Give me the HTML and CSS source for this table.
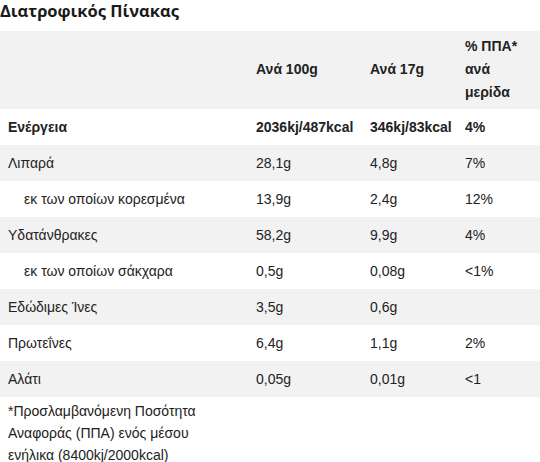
FILE: index.html
```html
<!DOCTYPE html>
<html lang="el">
<head>
  <meta charset="UTF-8" />
  <meta name="viewport" content="width=device-width, initial-scale=1.0"/>
  <title>Διατροφικός Πίνακας</title>
  <link rel="stylesheet" href="styles.css">
</head>
<body>
  <h2 class="titlos">Διατροφικός Πίνακας</h2>

  <table class="pinakas">
    <colgroup>
      <col class="c-onoma">
      <col class="c-100">
      <col class="c-merida">
      <col class="c-ppa">
    </colgroup>
    <thead>
      <tr>
        <th></th>
        <th>Ανά 100g</th>
        <th>Ανά 17g</th>
        <th>% ΠΠΑ* ανά μερίδα</th>
      </tr>
    </thead>
    <tbody>
      <tr class="energeia">
        <td>Ενέργεια</td>
        <td>2036kj/487kcal</td>
        <td>346kj/83kcal</td>
        <td>4%</td>
      </tr>
      <tr>
        <td>Λιπαρά</td>
        <td>28,1g</td>
        <td>4,8g</td>
        <td>7%</td>
      </tr>
      <tr class="ypo">
        <td>εκ των οποίων κορεσμένα</td>
        <td>13,9g</td>
        <td>2,4g</td>
        <td>12%</td>
      </tr>
      <tr>
        <td>Υδατάνθρακες</td>
        <td>58,2g</td>
        <td>9,9g</td>
        <td>4%</td>
      </tr>
      <tr class="ypo">
        <td>εκ των οποίων σάκχαρα</td>
        <td>0,5g</td>
        <td>0,08g</td>
        <td>&lt;1%</td>
      </tr>
      <tr>
        <td>Εδώδιμες Ίνες</td>
        <td>3,5g</td>
        <td>0,6g</td>
        <td></td>
      </tr>
      <tr>
        <td>Πρωτεΐνες</td>
        <td>6,4g</td>
        <td>1,1g</td>
        <td>2%</td>
      </tr>
      <tr>
        <td>Αλάτι</td>
        <td>0,05g</td>
        <td>0,01g</td>
        <td>&lt;1</td>
      </tr>
    </tbody>
  </table>

  <p class="simeiosi">*Προσλαμβανόμενη Ποσότητα Αναφοράς (ΠΠΑ) ενός μέσου ενήλικα (8400kj/2000kcal)</p>
</body>
</html>
```

FILE: styles.css
```css
* {
  box-sizing: border-box;
  margin: 0;
  padding: 0;
}

body {
  font-family: "Liberation Sans", Arial, sans-serif;
  font-size: 14px;
  color: #222;
  background: #fff;
}

.titlos {
  font-family: "Open Sans", "Liberation Sans", sans-serif;
  font-size: 16.5px;
  font-weight: 700;
  line-height: 22px;
  margin-bottom: 9px;
  color: #1a1a1a;
}

.pinakas {
  width: 540px;
  border-collapse: collapse;
  table-layout: fixed;
}

.c-onoma { width: 248px; }
.c-100 { width: 114px; }
.c-merida { width: 95px; }
.c-ppa { width: 83px; }

.pinakas th,
.pinakas td {
  text-align: left;
  vertical-align: middle;
  padding: 6.5px 8px;
  line-height: 23px;
}

.pinakas th {
  font-weight: bold;
  padding-top: 4px;
  padding-bottom: 5px;
}

.pinakas thead tr {
  background: #f2f2f2;
}

/* ζέβρα γραμμές */
.pinakas tbody tr:nth-child(even) {
  background: #f2f2f2;
}

.energeia td {
  font-weight: bold;
}

.ypo td:first-child {
  padding-left: 24px;
}

.simeiosi {
  width: 232px;
  padding: 3px 8px 0;
  line-height: 22px;
}
```
